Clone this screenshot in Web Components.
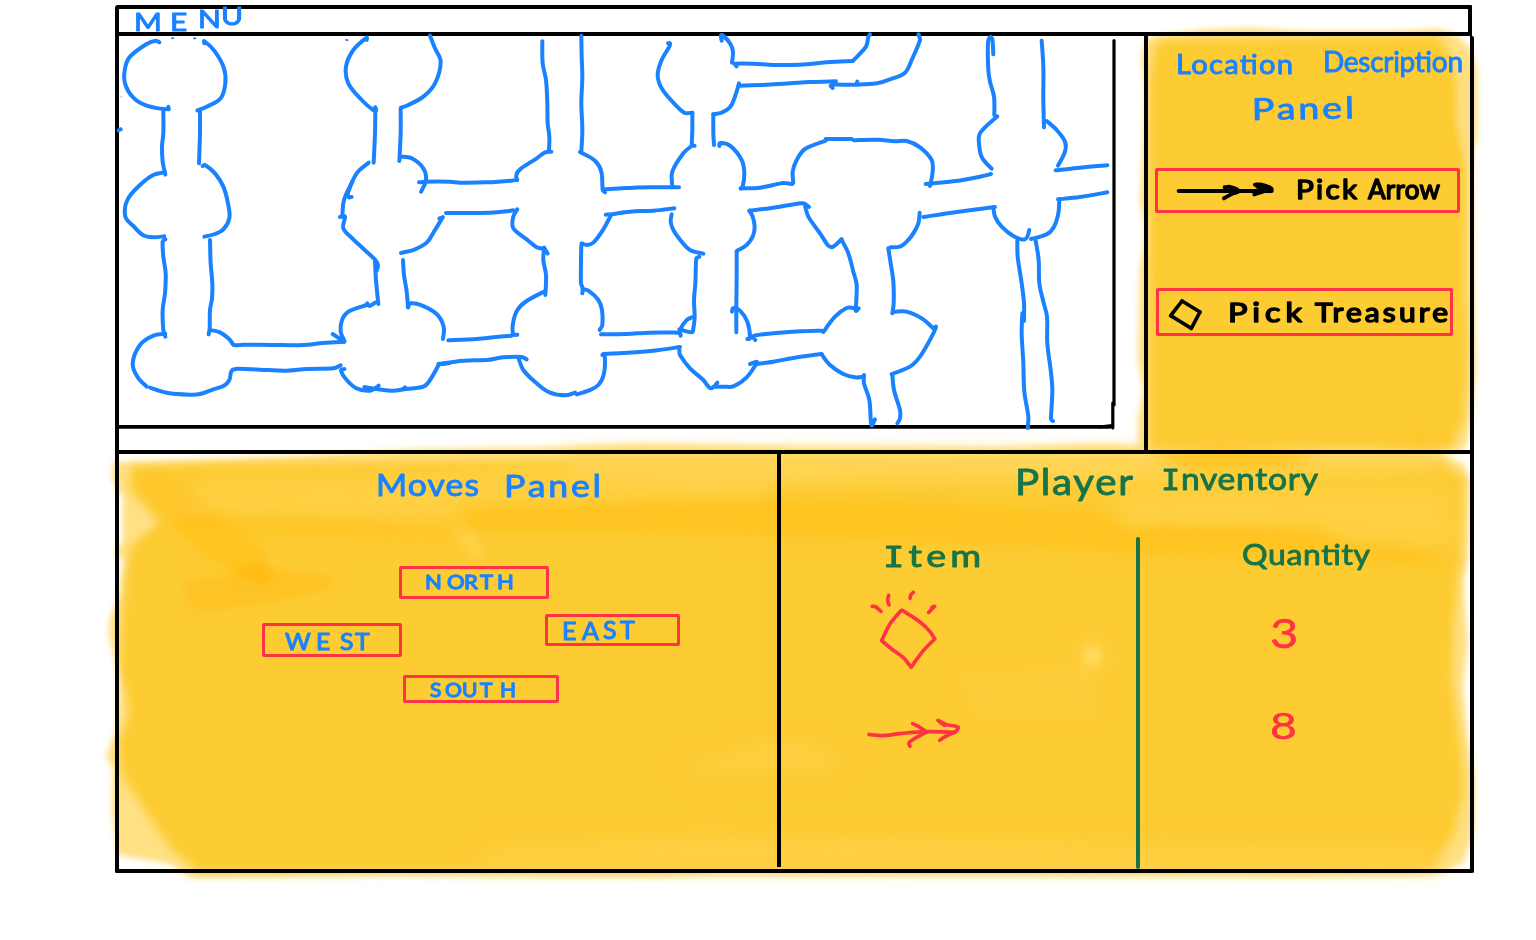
<!DOCTYPE html>
<html lang="en">
<head>
<meta charset="utf-8">
<title>Dungeon game</title>
<style>
html,body{margin:0;background:#fff}
body{font-family:Lato,"Noto Sans",sans-serif;width:1536px;height:940px;overflow:hidden}
</style>
</head>
<body>
<game-app></game-app>
<script>
const BLUE = '#1a82ff', RED = '#ff3346', GREEN = '#17744a';

/* Turns "x,y x,y ..." into a smooth path through all the points. */
function smooth(str) {
  const p = str.trim().split(/\s+/).map(s => s.split(',').map(Number));
  let d = `M${p[0]}`;
  for (let i = 0; i < p.length - 1; i++) {
    const a = p[i - 1] || p[i], b = p[i], c = p[i + 1], e = p[i + 2] || c;
    const len = Math.hypot(c[0] - b[0], c[1] - b[1]);
    const t = (u, v) => {
      const x = v[0] - u[0], y = v[1] - u[1], m = Math.hypot(x, y) || 1;
      const k = Math.min(m / 5, len / 2.8) / m;
      return [x * k, y * k];
    };
    const t1 = t(a, c), t2 = t(b, e);
    d += `C${(b[0] + t1[0]).toFixed(1)},${(b[1] + t1[1]).toFixed(1)} ${(c[0] - t2[0]).toFixed(1)},${(c[1] - t2[1]).toFixed(1)} ${c}`;
  }
  return d;
}

function define(name, render) {
  customElements.define(name, class extends HTMLElement {
    constructor() { super(); this.attachShadow({ mode: 'open' }); }
    connectedCallback() { this.shadowRoot.innerHTML = render(this); }
  });
}

/* One handwritten word: its box is w x h and its baseline is the box's bottom.
   xs / ys place single letters, wide stretches them sideways;
   otherwise the letters are spread over the word's width. */
define('ink-text', el => {
  const a = (n, d) => el.getAttribute(n) || d;
  const w = a('w', 100), h = a('h', 22), size = a('size', 28), xs = a('xs', ''), ys = a('ys', ''), wide = +a('wide', 1);
  const word = el.getAttribute('word');
  const body = word[0] === 'I'
    ? `<tspan font-family="DejaVu Sans Mono" font-size="${size * 0.95}">I</tspan>${word.slice(1)}` : word;
  const fit = xs ? `x="${xs.split(' ').map(v => (v / wide).toFixed(2)).join(' ')}"` : `x="0" textLength="${w / wide}"`;
  const y = ys ? ys.split(' ').map(v => +h + +v).join(' ') : h;
  return `<style>
    :host{display:block;flex:none;width:${w}px;height:${h}px}
    svg{display:block;overflow:visible}
    text{font:400 ${size}px Lato,"Noto Sans",sans-serif;fill:currentColor;stroke:currentColor;stroke-width:${a('ink', '.9')};stroke-linejoin:round}
  </style><svg width="${w}" height="${h}"><text ${fit} y="${y}" transform="rotate(${a('tilt', 0)} 0 ${h}) scale(${wide} 1)">${body}</text></svg>`;
});

define('ink-icon', el => {
  const k = el.getAttribute('kind');
  const icons = {
    arrow: { vb: '168 540 297 66', w: 99, h: 22, c: '#000', sw: 12, s: ['176,573 455,573', '314,562 330,561 356,573 335,582 312,595', '405,554 425,554 455,567 430,574 403,583', '412,560 440,564'] },
    gem: { vb: '144 174 108 102', w: 36, h: 34, c: '#000', sw: 11, s: ['186,183 152,227', '152,227 214,265', '214,265 240,216', '240,216 186,183'] },
    shiny: { vb: '84 420 210 240', w: 70, h: 80, c: RED, sw: 11, s: ['184,481 150,522 125,572', '125,572 155,597 190,623 208,645', '213,652 250,602 284,567', '284,567 270,545 240,516 187,481', '97,469 106,470 123,484', '146,436 143,450 147,465', '220,427 213,434 210,445', '284,469 276,472', '280,473 266,487'] },
    fletch: { vb: '78 804 282 96', w: 94, h: 32, c: RED, sw: 11, s: ['87,856 125,860 180,854 255,848 345,850', '218,824 235,832 260,849', '260,849 225,868 207,881 210,892', '294,814 320,827 354,834 345,849', '345,849 315,863 299,874', '300,820 313,829'] }
  };
  const i = icons[k];
  return `<style>:host{display:block;flex:none;width:${i.w}px;height:${i.h}px}svg{display:block;overflow:visible}</style>
  <svg width="${i.w}" height="${i.h}" viewBox="${i.vb}" fill="none" stroke="${i.c}" stroke-width="${i.sw}" stroke-linecap="round" stroke-linejoin="round">${i.s.map(s => `<path d="${smooth(s)}"/>`).join('')}</svg>`;
});

define('ink-button', () => `<style>
  :host{display:flex;flex:none;box-sizing:border-box;border:3px solid ${RED};border-radius:2px;align-items:flex-end}
</style><slot></slot>`);

/* Highlighter wash that lies behind the panels. */
define('marker-wash', () => `<style>
  :host{position:absolute;inset:0;z-index:-1}svg{display:block}
</style><svg width="1536" height="940" viewBox="0 0 1536 940">
 <defs><filter id="a" x="-10%" y="-10%" width="120%" height="120%"><feGaussianBlur stdDeviation="3"/></filter>
 <filter id="b" x="-20%" y="-40%" width="140%" height="180%"><feGaussianBlur stdDeviation="5"/></filter>
 <filter id="c" x="-20%" y="-40%" width="140%" height="180%"><feGaussianBlur stdDeviation="9"/></filter></defs>
 <g filter="url(#a)">
  <path fill="#ffe083" d="M1146 38L1200 30 1250 28 1310 32 1400 32 1440 29 1458 36 1470 48 1477 70 1477 140 1472 150 1474 290 1476 370 1472 410 1468 440 1462 452 1138 452 1138 420 1144 390 1138 360 1140 270 1146 230 1140 200 1147 90 1141 60Z"/>
  <path fill="#ffe083" d="M113 462L200 461 280 457 420 449 560 447 640 444 800 447 1000 448 1100 444 1200 450 1440 454 1464 464 1470 480 1468 560 1463 580 1468 640 1463 690 1468 740 1475 780 1474 830 1464 862 1440 874 1300 877 1150 876 900 875 720 874 660 877 400 875 190 878 170 864 118 855 112 810 113 770 106 756 116 732 120 680 109 635 109 620 120 595 124 560 114 555 123 540 124 500 112 480Z"/>
 </g>
 <g filter="url(#b)">
  <path fill="#fdcb30" d="M1157 40L1438 36 1452 60 1460 110 1466 160 1465 300 1468 340 1464 420 1452 448 1150 450 1148 400 1150 250 1149 80Z"/>
  <path fill="#fdcb30" d="M130 466L200 463 700 459 1440 460 1464 478 1461 560 1454 620 1452 680 1460 740 1464 790 1454 835 1430 870 900 870 200 872 172 850 146 812 122 775 118 745 130 710 120 670 122 620 126 570 132 545 158 522 130 490Z"/>
 </g>
 <g filter="url(#c)">
  <path fill="#ffd65a" opacity=".85" d="M560 452H1440V470L1180 474 1120 482 900 480 700 486 580 476Z"/>
  <path fill="#ffd24a" opacity=".7" d="M200 480L760 462V500L460 506 440 520 190 512Z"/>
  <path fill="#ffd24a" opacity=".7" d="M1110 490H1450L1455 545 1350 540 1300 524 1130 535Z"/>
  <path fill="#ffd147" opacity=".8" d="M675 770L790 738 850 765 780 771ZM480 852L700 835 1440 850V867H480Z"/>
 </g>
 <g filter="url(#b)">
  <path fill="#ffc421" d="M462 510L560 505 700 502 860 500 1000 508 1100 513 1125 530 1160 526 1320 530 1335 543 1440 555 1435 565 1330 557 1180 556 1020 545 780 535 600 530 470 530Z"/>
  <path fill="#ffc628" d="M175 522L300 519 455 528 450 537 320 535 200 530Z"/>
  <path fill="#ffc421" opacity=".9" d="M1150 455L1220 446 1290 452 1320 458 1270 468 1200 472ZM1370 447L1420 440 1452 448Z"/>
  <path fill="#ffd147" opacity=".45" d="M960 675L1090 665 1098 716 975 718Z"/>
  <path fill="#ffd345" opacity=".9" d="M454 530L476 532 486 562 470 558Z"/>
 </g>
 <g filter="url(#a)">
  <path fill="#ffc525" opacity=".55" d="M135 480L160 470 225 520 180 525Z"/>
  <path fill="#ffc31e" opacity=".9" d="M165 520L220 515 266 553 266 566 275 573 240 580 200 549Z"/>
  <path fill="#ffbe18" opacity=".65" d="M185 582L272 570 335 578 325 590 265 603 200 611 186 598Z"/>
  <path fill="#ffbb12" opacity=".7" d="M232 570L262 562 276 572 262 586Z"/>
  <path fill="#ffe083" opacity=".7" d="M124 500L158 523 128 543ZM1465 75L1472 85V165L1466 165 1454 115ZM120 795L135 808 165 854 122 850Z"/>
 </g>
 <circle cx="1092" cy="656" r="18" fill="#ffd650" opacity=".6" filter="url(#c)"/>
 <circle cx="1092" cy="656" r="7" fill="#ffdf70" filter="url(#b)"/>
</svg>`);

define('menu-bar', () => `<style>
 :host{display:block;box-sizing:border-box;width:1357px;height:31px;border:4px solid #000;border-radius:3px 1px 0 0;color:${BLUE};padding-left:17px}
</style><ink-text word="MENU" w="109" h="22" size="25" wide="1.2" xs="-2 34 62 85" ys="0 0 -3 -6" ink="1"></ink-text>`);

/* Caves and tunnels; every group is drawn at three times the map's scale. */
const MAP = [
 [100, 0, `178,127 168,122 140,132 90,170 75,205 75,250 100,293 140,317 205,328 205,320|313,130 313,123 345,155 372,205 376,250 362,295 320,320 292,331|190,334 190,400 186,440 188,485 196,524|300,332 300,400 297,490|195,517 160,525 120,555 82,600 76,650 100,678 130,706 160,712 193,709|308,498 315,495 345,520 370,560 384,610 388,655 370,688 345,702 313,710|800,120 800,113 760,150 738,200 745,250 785,300 818,329 828,332 826,322|990,107 1005,145 1022,185 1005,250 970,290 925,315 903,323|826,325 825,400 821,488|902,325 902,400 898,483|806,488 770,520 745,575 745,591 755,591|757,545 732,600 727,650|720,651 735,650 730,685 760,718 825,779 834,795 830,812|903,470 935,475 970,505 978,540 963,575|957,547 975,545 1050,545 1080,548 1160,547 1235,542 1252,539|1028,652 1005,690 980,728 945,748 903,759|1018,655 1028,652|56,391 62,388`],
 [100, 220, `196,58 188,65 190,110 197,160 195,220 188,270 190,330 196,350|330,60 332,130 337,190 336,235 330,270 329,325 326,343|196,341 160,347 120,375 98,430 112,470 140,500|150,503 200,518 270,524 300,522 340,508 372,497 388,480 395,452 415,446 480,449 560,452 620,447 700,445 722,436|330,330 360,337 385,355 400,374|405,376 430,374 520,375 610,375 670,369 733,365|733,365 698,342|825,120 828,180 835,252|909,120 912,165 920,215 924,262|733,362 722,335 726,300 745,275 800,255|802,250 808,258 825,248|924,262 932,250 965,256 1010,282 1031,320 1029,357|733,447 723,452 740,480 770,505 810,512 836,497|793,501 830,507 880,512 910,508 970,500 990,480 1017,433|910,508 915,502|1017,433 1050,429`],
 [440, 0, `307,124 308,190 318,240 322,310 323,370 328,410 327,450|334,455 315,457 290,475 240,508 229,525 231,541|424,107 425,170 427,230 424,310 427,390 424,455|420,456 465,482 484,515 488,570 495,577|490,568 580,563 650,562 717,562|497,644 515,643 570,635 640,632 703,625|18,639 120,639 180,636 220,631|232,628 220,650 220,685 260,718 290,742 312,746|312,743 323,761|513,645 490,688 460,728 440,735 425,730|684,130 690,130 688,140 665,180 653,225 665,265 700,308 733,338 757,338|757,338 757,390 756,436 764,437|845,122 845,105 870,130 879,155 876,188|890,199 885,191 940,191 1000,195 1080,194 1160,187 1238,183|1238,183 1278,140 1285,110 1290,103|897,250 885,290 870,322 845,338 820,343|897,257 980,254 1050,250 1110,246 1188,244|820,343 820,400 822,435|757,436 730,460 697,515 697,560|838,438 840,429 870,437 905,480 913,520 908,560 902,566|902,565 960,563 1000,555 1030,549 1057,552|928,632 990,625 1050,615 1090,610 1107,621|928,632 938,650 944,680 938,710 920,735 890,753|695,643 692,665 700,690 725,725 750,750 790,761`],
 [440, 220, `312,85 310,120 318,165 316,225|424,75 423,120 423,190 428,205 427,220|316,213 260,243 232,270 219,310 220,343 232,344|25,361 110,357 170,351 215,347|428,208 445,212 475,240 486,270 487,315 479,330|483,343 560,342 630,338 720,338|490,402 550,399 640,392 720,381|-5,432 70,422 140,420 190,412 245,411 260,418|235,412 250,450 290,490 330,518 378,526 405,518|410,523 445,512 475,495 492,460 494,405 487,405|778,110 769,115 766,190 762,240 764,290 760,325 755,337 718,328|755,292 740,300 720,330 722,347|890,95 890,170 889,260 889,337|876,275 880,264 900,272 922,305 930,355 922,357|946,360 940,348 1000,340 1080,334 1145,332|930,432 950,425 945,435|950,432 1000,425 1060,414 1145,402|718,390 720,405 750,445 790,480 812,505 832,488|820,500 850,500 880,499 920,472 950,430`],
 [780, 0, `158,264 152,257 160,254 230,254 290,250 330,238 375,218 395,180 420,120 415,103|230,250 232,245|640,163 637,118 630,112 624,130 625,210 630,245 642,290 643,345|652,349 600,400 598,440 607,475 635,506|785,122 790,200 790,300 792,382|800,363 830,390 855,425 855,455 834,497|827,511 900,503 982,496|834,598 900,591 982,577|40,548 38,515 50,480 75,447 137,422|137,417 215,417|222,421 290,419 345,424 380,423 420,442 455,480 458,515 450,558|437,552 520,544 600,530 633,522|419,638 415,670 400,700 380,725 360,740 332,742|430,651 530,636 645,621|75,617 85,650 120,700 145,737 160,740 185,717|640,622 645,650 665,680 700,708 735,718 748,690|838,598 835,640 822,680 800,703 753,717`],
 [780, 220, `186,62 205,100 220,155 230,195 228,272 236,265|325,85 332,130 340,185 341,250 337,280|130,336 165,290 200,264 220,264 228,272|343,275 380,275 430,298 460,325 468,320 455,350 420,410 390,440 335,462|125,403 150,435 190,462 225,472 250,470|252,465 252,490 268,540 274,615 285,598|337,463 342,510 360,570 360,595 352,610|712,62 713,110 725,190 732,250 732,303|727,280 725,340 730,430 733,515 745,590 743,624|767,62 776,120 778,190 790,245 801,290 802,370 812,450 817,510 813,598 819,603`]
];
define('dungeon-map', () => `<style>
 :host{display:block;flex:none;width:1025px;height:414px}svg{display:block;overflow:visible}
</style><svg width="1025" height="414" viewBox="119 36 1025 414" fill="none" stroke-linecap="round" stroke-linejoin="round">
 <g stroke="#000" stroke-width="3.6"><path d="M118 426.9H1110"/><path d="M1114 40.5V405M1112.8 403V428M1099 427L1112 425.5" stroke-width="3.2"/></g>
 ${MAP.map(([x, y, s]) => `<g transform="translate(${x} ${y}) scale(.33333)" stroke="${BLUE}" stroke-width="12">${s.split('|').map(p => `<path d="${smooth(p)}"/>`).join('')}</g>`).join('')}
 <g stroke="${BLUE}" stroke-width="1.8"><path d="M172 38.2h1.3M194 38.3h1.6M346 39.8l1.6.3"/><path d="M121 97l.3 0" stroke-width="1"/></g>
</svg>`);

define('location-panel', () => `<style>
 :host{display:flex;flex-direction:column;flex:1;box-sizing:border-box;border-left:4px solid #000;padding-top:16px;color:${BLUE}}
 .t{display:flex;gap:30px;padding-left:28px}
 .p{margin:24px 0 0 104px}
 ink-button{color:#000}
 .a{width:305px;height:45px;margin:48px 0 0 7px;padding:0 0 11px 18px}
 .a ink-icon{margin:0 21px -3px 0}
 .g{width:297px;height:48px;margin:75px 0 0 8px;padding:0 0 11px 9px}
 .g ink-icon{margin:0 24px -10px 0}
</style>
<div class="t"><ink-text word="Location" w="117" h="22" size="27" wide="1.08"></ink-text><ink-text word="Description" w="140" h="20" size="28"></ink-text></div>
<ink-text class="p" word="Panel" w="102" h="22" size="30" tilt="-1" wide="1.25"></ink-text>
<ink-button class="a"><ink-icon kind="arrow"></ink-icon><ink-text word="Pick" w="61" size="27" ink="1.5" wide="1.1"></ink-text><ink-text word="Arrow" w="72" size="26" ink="1.5" style="margin-left:11px"></ink-text></ink-button>
<ink-button class="g"><ink-icon kind="gem"></ink-icon><ink-text word="Pick" w="74" size="27" ink="1.5" wide="1.2"></ink-text><ink-text word="Treasure" w="133" size="26" ink="1.5" wide="1.15" style="margin-left:13px"></ink-text></ink-button>`);

define('moves-panel', () => `<style>
 :host{display:block;flex:none;box-sizing:border-box;width:662px;height:413px;border-right:4px solid #000;padding-top:20px;color:${BLUE}}
 .t{display:flex;gap:25px;padding-left:257px}
 .c{display:flex;align-items:flex-start;margin-top:69px;padding-left:143px}
 .w{width:140px;height:34px;margin-top:57px;padding:0 0 4px 20px}
 .m{width:150px;margin:0 -4px 0 -3px}
 .n{width:150px;height:33px;padding:0 0 7px 24px}
 .s{width:156px;height:28px;margin:76px 0 0 4px;padding:0 0 3px 24px}
 .e{width:135px;height:32px;margin-top:48px;padding:0 0 3px 15px}
</style>
<div class="t"><ink-text word="Moves" w="103" size="30" wide="1.12"></ink-text><ink-text word="Panel" w="97" h="23" size="31" wide="1.15"></ink-text></div>
<div class="c">
 <ink-button class="w"><ink-text word="WEST" w="87" h="18" size="23" wide="1.08" xs="0 31 55 70" ink="1.1"></ink-text></ink-button>
 <div class="m"><ink-button class="n"><ink-text word="NORTH" w="88" h="16" size="20" wide="1.1" xs="-1 21 38 54 71" ink="1.3"></ink-text></ink-button>
 <ink-button class="s"><ink-text word="SOUTH" w="88" h="16" size="20" wide="1.05" xs="0 15 32 50 70" ink="1.3"></ink-text></ink-button></div>
 <ink-button class="e"><ink-text word="EAST" w="75" h="20" size="25" xs="-1 19 40 57" ys="0 0 -1 -1" ink="1.1"></ink-text></ink-button>
</div>`);

define('inventory-panel', () => `<style>
 :host{display:block;flex:1;padding-top:17px;color:${GREEN}}
 .t{display:flex;gap:28px;padding-left:234px;height:24px}
 .b{display:flex}
 .i{width:355px}
 .i>ink-text{margin:50px 0 0 102px}
 .bar{width:4px;height:332px;margin-top:42px;border-radius:2px;background:${GREEN}}
 .q>ink-text{margin:48px 0 0 102px}
 .q>.n{color:${RED};margin:54px 0 0 130px}
</style>
<div class="t"><ink-text word="Player" w="118" h="24" size="36" wide="1.12"></ink-text><ink-text word="Inventory" w="157" h="19" size="30" wide="1.12"></ink-text></div>
<div class="b">
 <div class="i"><ink-text word="Item" w="98" size="30" wide="1.25"></ink-text>
  <ink-icon kind="shiny" style="margin:23px 0 0 87px"></ink-icon>
  <ink-icon kind="fletch" style="margin:47px 0 0 85px"></ink-icon></div>
 <div class="bar"></div>
 <div class="q"><ink-text word="Quantity" w="128" size="29" wide="1.1"></ink-text>
  <ink-text class="n" word="3" w="27" h="29" size="40" xs="0" wide="1.22" ink=".6"></ink-text>
  <ink-text class="n" word="8" w="26" h="28" size="37" xs="0" wide="1.25" ink=".6" style="margin-top:63px"></ink-text></div>
</div>`);

define('game-app', () => `<style>
 :host{display:block;position:relative;isolation:isolate;box-sizing:border-box;width:1536px;height:940px;padding:5px 0 0 115px}
 .board{box-sizing:border-box;width:1359px;height:837px;border:solid #000;border-width:0 4px 4px;border-radius:0 2px 2px 2px}
 .row{display:flex}
 .top{height:414px}
 .low{height:415px;border-top:4px solid #000}
</style>
<marker-wash></marker-wash>
<menu-bar></menu-bar>
<div class="board">
 <div class="row top"><dungeon-map></dungeon-map><location-panel></location-panel></div>
 <div class="row low"><moves-panel></moves-panel><inventory-panel></inventory-panel></div>
</div>`);
</script>
</body>
</html>
